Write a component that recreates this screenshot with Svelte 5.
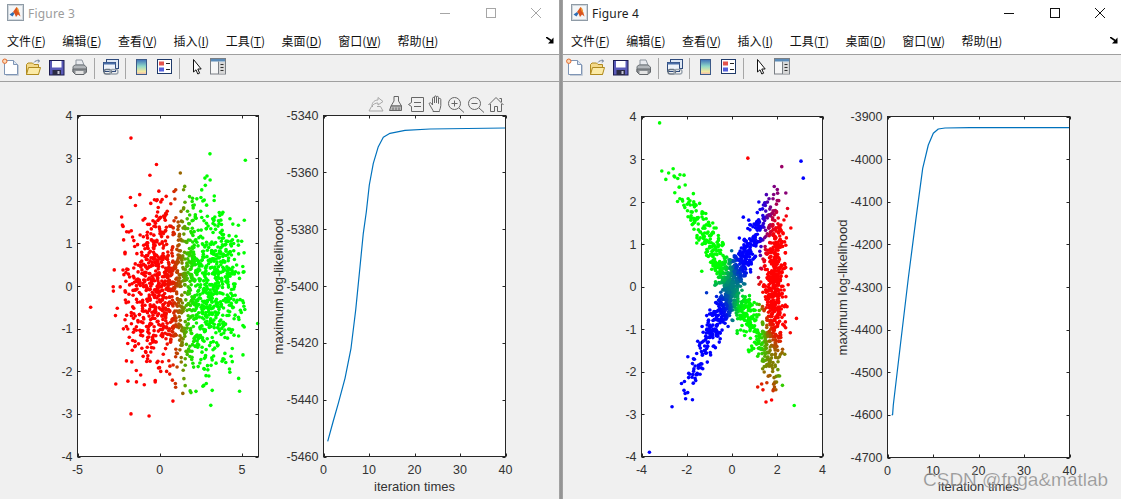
<script>
  const menus = [
    ['文件', 'F'], ['编辑', 'E'], ['查看', 'V'], ['插入', 'I'],
    ['工具', 'T'], ['桌面', 'D'], ['窗口', 'W'], ['帮助', 'H']
  ];

  function rng(seed) {
    let a = 0x9e3779b9, b = 0x243f6a88, c = 0xb7e15162, d = seed | 0;
    const next = () => {
      a |= 0; b |= 0; c |= 0; d |= 0;
      const t = (((a + b) | 0) + d) | 0;
      d = (d + 1) | 0;
      a = b ^ (b >>> 9);
      b = (c + (c << 3)) | 0;
      c = (c << 21) | (c >>> 11);
      c = (c + t) | 0;
      return (t >>> 0) / 4294967296;
    };
    for (let i = 0; i < 20; i++) next();
    return next;
  }
  function gauss(r) {
    return Math.sqrt(-2 * Math.log(r() + 1e-9)) * Math.cos(2 * Math.PI * r());
  }
  const rgb = (a, b, c) => `rgb(${Math.round(a * 255)},${Math.round(b * 255)},${Math.round(c * 255)})`;

  function leftPoints() {
    const r = rng(11), pts = [];
    for (let i = 0; i < 1500; i++) {
      const red = i % 2 === 0;
      const x = (red ? 0 : 2.9) + gauss(r) * 1.12;
      const y = gauss(r) * 1.0;
      if (Math.abs(y) > 2.7 || x < -2.9 || x > 5.2) continue;
      const p = 1 / (1 + Math.exp(3.4 * (x - 1.35)));
      pts.push({ x, y, c: rgb(p, 1 - p, 0) });
    }
    const R = rgb(1, 0, 0), G = rgb(0, 1, 0);
    [[-4.2, -0.5, R], [-1.75, 3.47, R], [-0.2, 2.85, R], [-0.6, 2.6, R], [1.25, 2.65, rgb(0.6, 0.4, 0)],
     [3.05, 3.1, G], [5.2, 2.95, G], [5.95, -0.88, G], [-1.75, -3, R], [-0.65, -3.05, R],
     [3.1, -2.8, G], [4.85, -2.47, G], [0.8, -2.7, R], [1.4, -2.52, rgb(0.6, 0.4, 0)]]
      .forEach(([x, y, c]) => pts.push({ x, y, c }));
    return pts;
  }

  function rightPoints() {
    const r = rng(5), pts = [];
    const s2 = 2 * 0.27 * 0.27;
    const mix = (x, y) => {
      const db = Math.abs(1.25 * x - y) / 1.6;
      const dg = Math.abs(x + y) / 1.41;
      const dr = Math.abs(x - 1.85 - 0.03 * y);
      const wb = Math.exp(-db * db / s2), wg = Math.exp(-dg * dg / s2), wr = Math.exp(-dr * dr / s2);
      const t = wb + wg + wr + 1e-9;
      return rgb(wr / t, wg / t, wb / t);
    };
    for (let i = 0; i < 1650; i++) {
      const k = i % 3;
      let x, y;
      if (k === 0) {
        y = gauss(r) * 1.05 - 0.05;
        x = y / 1.25 + gauss(r) * 0.27;
      } else if (k === 1) {
        x = gauss(r) * 1.1;
        y = -x + gauss(r) * 0.33;
      } else {
        y = gauss(r) * 1.05 - 0.05;
        x = 1.85 + 0.03 * y + gauss(r) * 0.26;
      }
      if (y > 2.75 || y < -2.75 || (k === 1 && x > 1.85) || (k === 0 && y > 2.1)) continue;
      pts.push({ x, y, c: mix(x, y) });
    }
    const R = rgb(1, 0, 0), G = rgb(0, 1, 0), B = rgb(0, 0, 1);
    [[-3.2, 3.85, G], [-3.65, -3.9, B], [0.7, 3.02, R], [3.05, 2.95, B], [3.15, 2.55, B],
     [2.75, -2.8, G], [2.85, -0.75, R], [-2.65, -2.83, B], [-2.8, 2.67, G],
     [-2.6, 2.77, G], [-2.3, 2.63, G], [2.2, 2.82, rgb(.6, 0, .4)], [1.75, -2.67, R]]
      .forEach(([x, y, c]) => pts.push({ x, y, c }));
    return pts;
  }

  const range = (a, b, s) => {
    const o = [];
    for (let v = a; s > 0 ? v <= b : v >= b; v += s) o.push(v);
    return o;
  };
  const fx = (a, v) => a.l + ((v - a.xmin) / (a.xmax - a.xmin)) * (a.r - a.l);
  const fy = (a, v) => a.b - ((v - a.ymin) / (a.ymax - a.ymin)) * (a.b - a.t);

  const figures = [
    {
      id: 3, cls: 'inactive', vx: 0, toolbar: true,
      axes: [
        { l: 77.5, r: 258.5, t: 115.5, b: 456.5, xmin: -5, xmax: 6, ymin: -4, ymax: 4, xt: [-5, 0, 5], yt: range(-4, 4, 1), pts: leftPoints() },
        { l: 323.5, r: 505.5, t: 115.5, b: 456.5, xmin: 0, xmax: 40, ymin: -5460, ymax: -5340, xt: range(0, 40, 10), yt: range(-5460, -5340, 20),
          line: '327.7,441.3 333,422 338.3,403.3 345,378.3 351,348.3 355.7,310 360,266.7 363.3,233.3 366.3,212 369.3,185 373.3,163.3 378.3,146.7 383.3,137.3 390,133.3 405,130.3 430,129 505,128',
          yl: 279, xl: 414.5, ylc: 286.5 }
      ]
    },
    {
      id: 4, cls: 'active', vx: 563, toolbar: false,
      axes: [
        { l: 641.5, r: 822.5, t: 116.5, b: 456.5, xmin: -4, xmax: 4, ymin: -4, ymax: 4, xt: range(-4, 4, 2), yt: range(-4, 4, 1), pts: rightPoints() },
        { l: 887.5, r: 1069.5, t: 116.5, b: 457.5, xmin: 0, xmax: 40, ymin: -4700, ymax: -3900, xt: range(0, 40, 10), yt: range(-4700, -3900, 100),
          line: '891.7,415 892.6,414.6 893.3,405 900,348.3 908.3,278.3 916,218.3 922.7,168.3 928.3,145 933.3,133.3 938.3,129 945,128 970,127.7 1069,127.7',
          yl: 843, xl: 978.5, ylc: 287.5 }
      ]
    }
  ];
</script>

{#snippet logo()}
  <svg class="logo" width="17" height="17" viewBox="0 0 17 17" aria-hidden="true">
    <rect x="0.5" y="0.5" width="16" height="16" fill="#f4f6f8" stroke="#8f9ba6" />
    <rect x="1.5" y="1.5" width="14" height="14" fill="none" stroke="#cfd6dc" />
    <path d="M2.5 10.5 6 8 7.5 9.5 5.5 12.5z" fill="#2f6fb5" />
    <path d="M6 8 9.5 3 11 4.5 13.5 12.5 11 10.5 9 13 7.5 9.5z" fill="#d9531e" />
    <path d="M9.5 3 11 4.5 12.5 9.5 10.5 7z" fill="#f0a030" />
  </svg>
{/snippet}

{#snippet toolbarIcons()}
  <span class="tool">
    <svg width="18" height="18" viewBox="0 0 18 18" aria-hidden="true">
      <path d="M2.5 2.5H11.5L15.5 6.5V16.5H2.5z" fill="#fff" stroke="#7f95b5" />
      <path d="M11.5 2.5V6.5H15.5" fill="#dce6f2" stroke="#7f95b5" />
      <path d="M16.5 7V17.5H4" fill="none" stroke="#c4ccd6" />
      <circle cx="2.8" cy="3.2" r="2.2" fill="#fbd9b8" stroke="#e2692a" />
    </svg>
  </span>
  <span class="tool">
    <svg width="18" height="18" viewBox="0 0 18 18" aria-hidden="true">
      <path d="M1.5 16.5V6.5L3 5H7.5L9 6.5H13.5V16.5z" fill="#f3d98a" stroke="#b08a1e" />
      <path d="M1.5 16.5 3.5 9.5H15.5L13.5 16.5z" fill="#fbeaa6" stroke="#b08a1e" />
      <path d="M9 4.5C10 2.8 12 2.2 14.5 3M14.5 3 12.8 1.6M14.5 3 12.8 4.6" fill="none" stroke="#6d7f99" />
    </svg>
  </span>
  <span class="tool">
    <svg width="18" height="18" viewBox="0 0 18 18" aria-hidden="true">
      <rect x="1.5" y="2.5" width="14.5" height="14.5" fill="#5a5ab8" stroke="#1c1c50" />
      <rect x="4" y="3" width="9.5" height="6.5" fill="#fff" />
      <rect x="4.5" y="12" width="8.5" height="5" fill="#2c2c44" />
      <rect x="9.5" y="13" width="2" height="3" fill="#c8c8d8" />
    </svg>
  </span>
  <span class="tool">
    <svg width="18" height="18" viewBox="0 0 18 18" aria-hidden="true">
      <path d="M5 2H11L13 7H5z" fill="#e8eaee" stroke="#8d959e" />
      <path d="M2 8.5 4 7H13L15.5 9V14H2z" fill="#b2b6ba" stroke="#6f7479" />
      <path d="M2 11H15.5V14L13 16.5H4.5L2 14z" fill="#8a8e92" stroke="#62666a" />
      <rect x="4.5" y="13" width="8" height="3" fill="#e4e4e4" />
    </svg>
  </span>
  <span class="sep"></span>
  <span class="tool">
    <svg width="18" height="18" viewBox="0 0 18 18" aria-hidden="true">
      <rect x="4.5" y="1.5" width="12" height="9" fill="#dfe8f4" stroke="#2e4a7c" />
      <rect x="1.5" y="4.5" width="12" height="9" fill="#eef3fa" stroke="#2e4a7c" />
      <path d="M1.5 4.5H13.5V6.5H1.5z" fill="#4a6ea8" />
      <rect x="2" y="11.5" width="7.5" height="4.5" rx="2.2" fill="none" stroke="#6c7783" stroke-width="1.4" />
      <rect x="8" y="11.5" width="8" height="4.5" rx="2.2" fill="none" stroke="#9aa4ae" stroke-width="1.4" />
    </svg>
  </span>
  <span class="sep"></span>
  <span class="tool">
    <svg width="18" height="18" viewBox="0 0 18 18" aria-hidden="true">
      <defs>
        <linearGradient id="cbar" x1="0" y1="0" x2="0" y2="1">
          <stop offset="0" stop-color="#3d6fb8" />
          <stop offset="0.45" stop-color="#8fd8c8" />
          <stop offset="0.8" stop-color="#f2e8a0" />
          <stop offset="1" stop-color="#eeb4b0" />
        </linearGradient>
      </defs>
      <rect x="3.5" y="1.5" width="10" height="15" fill="url(#cbar)" stroke="#3c5a88" />
    </svg>
  </span>
  <span class="tool">
    <svg width="18" height="18" viewBox="0 0 18 18" aria-hidden="true">
      <rect x="1.5" y="1.5" width="14" height="14" fill="#fff" stroke="#1f3a6a" />
      <rect x="3" y="3.5" width="5" height="4" fill="#e4554e" />
      <rect x="3" y="9.5" width="5" height="4" fill="#5560dc" />
      <path d="M10 5.5H14M10 11.5H14" stroke="#222" />
    </svg>
  </span>
  <span class="sep"></span>
  <span class="tool">
    <svg width="18" height="18" viewBox="0 0 18 18" aria-hidden="true">
      <path d="M6.5 1.5V14L9 11.8 10.8 16 12.6 15.2 10.8 11H14.2z" fill="#fff" stroke="#111" stroke-linejoin="round" />
    </svg>
  </span>
  <span class="tool">
    <svg width="18" height="18" viewBox="0 0 18 18" aria-hidden="true">
      <rect x="0.5" y="0.5" width="15" height="15.5" fill="#f6f6f6" stroke="#7a7f85" />
      <rect x="1" y="1" width="14" height="2.5" fill="#5b8bb8" />
      <path d="M8.5 3.5V16" stroke="#7a7f85" />
      <rect x="9" y="4" width="6" height="11.5" fill="#d8d8d8" />
      <path d="M10.5 6.5H13.5M10.5 9.5H13.5M10.5 12.5H13.5" stroke="#333" />
    </svg>
  </span>
{/snippet}

{#snippet axesTools()}
  <g class="ft light">
    <path d="M369 111H383L380.5 106.5H377M369 111 371.5 106.5H373" />
    <path d="M372 106C372 102 375 100 378 100V97.5L383 101.5 378 105V103C375.5 103 373.5 104 372 106z" />
  </g>
  <g class="ft">
    <path d="M394 96.5H398.5V101L401.5 106H391L394 101z" />
    <path d="M391 106H401.5V110.5H389.5z" fill="#bbb" />
    <path d="M393 110V107.5M396 110V107.5M399 110V107.5" />
  </g>
  <g class="ft">
    <path d="M411.5 97.5H423.5V111.5H411.5V106.5L408.5 104.5 411.5 102.5z" />
    <path d="M414 102.5H421M414 106.5H421" />
  </g>
  <g class="ft">
    <path d="M433 110.5 429.5 104.5C428.5 102.8 430.5 102 431.5 103.5L432.5 105V98.5C432.5 97 434.5 97 434.5 98.5V103V97C434.5 95.5 436.5 95.5 436.5 97V103V97.5C436.5 96 438.5 96 438.5 97.5V103.5V99.5C438.5 98 440.8 98 440.8 99.5V105.5C440.8 107.5 440 109 439.5 110.5V111.5H433z" />
  </g>
  <g class="ft">
    <circle cx="454.5" cy="103.5" r="6" />
    <path d="M459 108 464 112.5M451.5 103.5H457.5M454.5 100.5V106.5" />
  </g>
  <g class="ft">
    <circle cx="474.5" cy="103.5" r="6" />
    <path d="M479 108 484 112.5M471.5 103.5H477.5" />
  </g>
  <g class="ft">
    <path d="M488.5 105 496 97.5 503.5 105M490.5 104V111.5H494.5V106.5H497.5V111.5H501.5V104" />
    <path d="M499.5 98.5H501.5V102" />
  </g>
{/snippet}

{#snippet axes(a)}
  <rect class="plotbg" x={a.l} y={a.t} width={a.r - a.l} height={a.b - a.t} />
  {#if a.pts}
    {#each a.pts as p}
      <circle cx={fx(a, p.x)} cy={fy(a, p.y)} r="1.8" fill={p.c} />
    {/each}
  {/if}
  {#if a.line}
    <polyline class="curve" points={a.line} />
  {/if}
  <rect class="frame" x={a.l} y={a.t} width={a.r - a.l} height={a.b - a.t} />
  {#each a.xt as v}
    <path class="tick" d="M{Math.round(fx(a, v)) + 0.5} {a.b}v-3M{Math.round(fx(a, v)) + 0.5} {a.t}v3" />
    <text class="label" x={fx(a, v)} y={a.b + 17} text-anchor="middle">{v}</text>
  {/each}
  {#each a.yt as v}
    <path class="tick" d="M{a.l} {Math.round(fy(a, v)) + 0.5}h3M{a.r} {Math.round(fy(a, v)) + 0.5}h-3" />
    <text class="label" x={a.l - 5} y={fy(a, v) + 4.5} text-anchor="end">{v}</text>
  {/each}
  {#if a.line}
    <text class="axis-title" x={a.xl} y="491" text-anchor="middle">iteration times</text>
    <text class="axis-title" text-anchor="middle" transform="translate({a.yl + 4} {a.ylc}) rotate(-90)">maximum log-likelihood</text>
  {/if}
{/snippet}

<div class="desktop">
  {#each figures as f, i}
    {#if i === 1}<div class="divider"></div>{/if}
    <section class="win {f.cls}">
      <header class="titlebar">
        {@render logo()}
        <span class="title">Figure {f.id}</span>
        <div class="controls">
          <span class="ctl"><svg width="10" height="10" viewBox="0 0 10 10" aria-hidden="true"><path d="M0 5.5H10" /></svg></span>
          <span class="ctl"><svg width="10" height="10" viewBox="0 0 10 10" aria-hidden="true"><rect x="0.5" y="0.5" width="9" height="9" /></svg></span>
          <span class="ctl"><svg width="10" height="10" viewBox="0 0 10 10" aria-hidden="true"><path d="M0 0 10 10M10 0 0 10" /></svg></span>
        </div>
      </header>
      <nav class="menubar">
        {#each menus as [name, key]}
          <span class="menu">{name}(<u>{key}</u>)</span>
        {/each}
        <svg class="dock" width="8" height="7" viewBox="0 0 8 7" aria-hidden="true">
          <path d="M0 0 5 3.5" stroke="#000" stroke-width="1.6" fill="none" />
          <path d="M7.5 0.5V6.5H2z" fill="#000" />
        </svg>
      </nav>
      <div class="toolbar">{@render toolbarIcons()}</div>
      <svg class="figure" viewBox="{f.vx} 82 560 417" width="560" height="417">
        {#each f.axes as a}
          {@render axes(a)}
        {/each}
        {#if f.toolbar}{@render axesTools()}{/if}
        {#if f.id === 4}
          <text class="mark" x="923" y="485.5">CSDN @fpga&amp;matlab</text>
        {/if}
      </svg>
    </section>
  {/each}
</div>

<style>
  :global(body) { margin: 0; background: #f0f0f0; }
  .desktop {
    display: flex;
    width: 1121px;
    height: 499px;
    overflow: hidden;
    font-family: "Noto Sans CJK SC", "Noto Sans", sans-serif;
  }
  .win {
    --inset: 0px;
    flex: 0 0 559px;
    width: 559px;
    background: #f0f0f0;
    display: flex;
    flex-direction: column;
  }
  .win.active {
    --inset: 1px;
    flex: 0 0 560px;
    width: 560px;
  }
  .divider {
    flex: 0 0 4px;
    background: linear-gradient(90deg, #a8a8a8, #8e8e8e 50%, #a8a8a8);
  }
  .titlebar {
    height: 27px;
    background: #fff;
    display: flex;
    align-items: center;
    padding-left: calc(7px + var(--inset));
    box-sizing: border-box;
  }
  .logo { margin-top: -2px; flex: none; }
  .title {
    margin-left: 4px;
    font: 12px/16px "Noto Sans", sans-serif;
    letter-spacing: 0.2px;
  }
  .inactive .title { color: #9c9c9c; }
  .active .title { color: #1c1c1c; }
  .controls { margin-left: auto; display: flex; margin-top: -1px; }
  .ctl {
    width: 45.5px;
    display: flex;
    justify-content: center;
    line-height: 0;
  }
  .ctl svg { fill: none; stroke-width: 1; }
  .inactive .ctl svg { stroke: #a6a6a6; }
  .active .ctl svg { stroke: #111; }
  .menubar {
    height: 28px;
    box-sizing: border-box;
    background: #fff;
    border-bottom: 1px solid #a0a0a0;
    display: flex;
    align-items: center;
    gap: 16.5px;
    padding: 0 5px 0 calc(7px + var(--inset));
    font-size: 12px;
    color: #111;
  }
  .menu { white-space: nowrap; line-height: 26px; }
  .menu u { text-underline-offset: 1px; }
  .dock { margin-left: auto; margin-top: -1px; }
  .toolbar {
    height: 27px;
    box-sizing: border-box;
    background: #f0f0f0;
    border-bottom: 1px solid #a0a0a0;
    display: flex;
    align-items: flex-start;
    padding: 3px 0 0 calc(2px + var(--inset));
  }
  .tool { flex: 0 0 23px; line-height: 0; }
  .sep {
    flex: 0 0 8px;
    box-sizing: border-box;
    height: 21px;
    border-left: 1px solid #a6a6a6;
  }
  .figure { display: block; flex: none; }
  .plotbg { fill: #fff; }
  .frame { fill: none; stroke: #262626; stroke-width: 1; }
  .tick { stroke: #262626; stroke-width: 1; fill: none; }
  .curve { fill: none; stroke: #0072bd; stroke-width: 1.2; stroke-linejoin: round; }
  .label, .axis-title {
    font-family: "Liberation Sans", Arial, sans-serif;
    fill: #333;
  }
  .label { font-size: 12.5px; }
  .axis-title { font-size: 13px; }
  .ft { fill: none; stroke: #666; stroke-width: 1; }
  .ft.light { stroke: #a8a8a8; }
  .mark {
    font-family: "Liberation Sans", Arial, sans-serif;
    font-size: 19px;
    fill: rgba(120, 120, 120, 0.75);
    stroke: rgba(255, 255, 255, 0.35);
    stroke-width: 0.5;
  }
</style>
